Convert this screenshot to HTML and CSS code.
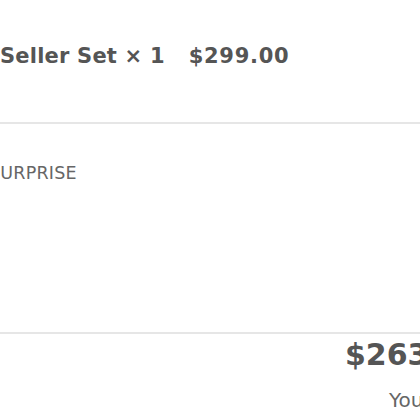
FILE: index.html
```html
<!DOCTYPE html>
<html>
<head>
<meta charset="utf-8">
<link rel="stylesheet" href="styles.css">
</head>
<body>
<div class="page">
  <div class="item">
    <span class="name">Seller Set × 1</span>
    <span class="price">$299.00</span>
  </div>
  <div class="rule"></div>
  <div class="discount">SURPRISE</div>
  <div class="rule rule2"></div>
  <div class="total">$263.12</div>
  <div class="save">You save $35.88</div>
</div>
</body>
</html>
```
FILE: styles.css
```css
html, body {
  margin: 0;
  padding: 0;
  background: #fff;
  overflow: hidden;
  width: 420px;
  height: 420px;
}
.page {
  font-family: "DejaVu Sans", Verdana, sans-serif;
  white-space: nowrap;
}
.item {
  display: flex;
  gap: 24px;
  padding-top: 42px;
  height: 59px;
  font-weight: bold;
  font-size: 21px;
  color: #555;
  line-height: 28px;
}
.name {
  letter-spacing: 0.2px;
}
.price {
  letter-spacing: 0.7px;
}
.rule {
  height: 2px;
  background: #e6e6e6;
  margin-top: 21px;
}
.discount {
  margin-left: -11px;
  margin-top: 38px;
  font-size: 17.5px;
  line-height: 22px;
  color: #666;
  letter-spacing: 0.2px;
  height: 170px;
}
.rule2 {
  margin-top: 0;
}
.total {
  padding-left: 345px;
  margin-top: 3px;
  font-size: 30px;
  font-weight: bold;
  color: #555;
  line-height: 36px;
}
.save {
  padding-left: 389px;
  margin-top: 15px;
  font-size: 20px;
  color: #666;
  line-height: 24px;
}
```
